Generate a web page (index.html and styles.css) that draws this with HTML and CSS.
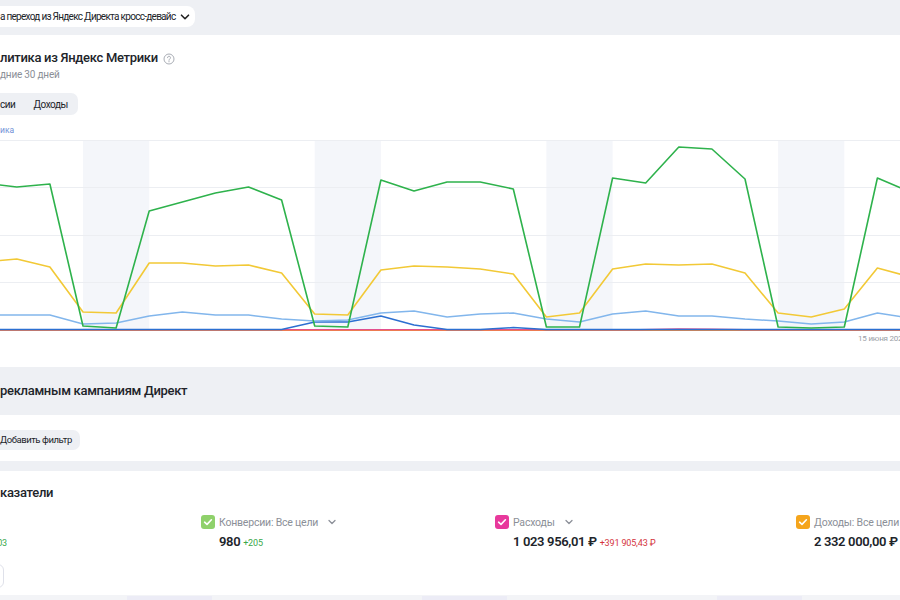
FILE: index.html
```html
<!DOCTYPE html>
<html lang="ru">
<head>
<meta charset="utf-8">
<title>Аналитика</title>
<link rel="stylesheet" href="styles.css">
</head>
<body>
<div class="page">
  <div class="topbar">
    <button class="select">а переход из Яндекс Директа кросс-девайс
      <svg class="chev" width="10" height="10" viewBox="0 0 10 10"><path d="M1.5 3.2 5 6.7 8.5 3.2" fill="none" stroke="#222" stroke-width="1.6" stroke-linecap="round" stroke-linejoin="round"/></svg>
    </button>
  </div>

  <section class="panel analytics">
    <h2 class="title">литика из Яндекс Метрики
      <svg class="help" width="12" height="12" viewBox="0 0 12 12"><circle cx="6" cy="6" r="5" fill="none" stroke="#a9adb5" stroke-width="1"/><path d="M4.5 4.7a1.5 1.5 0 1 1 2.1 1.4c-.4.2-.6.5-.6.9v.3" fill="none" stroke="#a9adb5" stroke-width="1" stroke-linecap="round"/><circle cx="6" cy="8.7" r=".6" fill="#a9adb5"/></svg>
    </h2>
    <div class="subtitle">дние 30 дней</div>
    <div class="tabs"><span class="tab">сии</span><span class="tab">Доходы</span></div>
    <div class="legend">ика</div>
    <svg class="chart" width="900" height="210" viewBox="0 136 900 210">
      <g fill="#f4f6fa">
        <rect x="83" y="140" width="66.2" height="190"/>
        <rect x="314.7" y="140" width="66.2" height="190"/>
        <rect x="546.4" y="140" width="66.2" height="190"/>
        <rect x="778.1" y="140" width="66.2" height="190"/>
      </g>
      <g stroke="#eceef2" stroke-width="1">
        <line x1="0" y1="140.5" x2="900" y2="140.5"/>
        <line x1="0" y1="187.5" x2="900" y2="187.5"/>
        <line x1="0" y1="235.5" x2="900" y2="235.5"/>
        <line x1="0" y1="282.5" x2="900" y2="282.5"/>
      </g>
      <g fill="none" stroke-linejoin="round" stroke-linecap="round">
        <polyline stroke="#f08a3c" stroke-width="1.6" points="-20,330.2 920,330.2"/>
        <polyline stroke="#e3508f" stroke-width="1.2" points="-20,329.6 640,329.6 678.8,328.9 711.9,329 745,329.6 920,329.6"/>
        <polyline stroke="#2c6fd1" stroke-width="1.5" points="-16.3,329.5 281.6,329.5 314.7,322 347.8,322 380.9,316 414,325 447.1,329.5 480.2,329.5 513.3,327.6 546.4,329.5 910.5,329.5"/>
        <polyline stroke="#82b6ec" stroke-width="1.5" points="-16.3,315 16.8,315 49.9,315 83,324 116.1,323 149.2,316 182.3,312 215.4,315 248.5,315 281.6,319 314.7,321 347.8,320 380.9,313 414,311 447.1,317 480.2,314 513.3,313 546.4,319 579.5,322 612.6,314 645.7,311 678.8,316 711.9,316 745,319 778.1,321 811.2,324 844.3,322 877.4,313 910.5,318"/>
        <polyline stroke="#f2c936" stroke-width="1.6" points="-16.3,262 16.8,259 49.9,267 83,312 116.1,313 149.2,263 182.3,263 215.4,266 248.5,265 281.6,273 314.7,314 347.8,315 380.9,270 414,266 447.1,267 480.2,269 513.3,274 546.4,317 579.5,313 612.6,269 645.7,264 678.8,265 711.9,264 745,273 778.1,313 811.2,317 844.3,309 877.4,268 910.5,277"/>
        <polyline stroke="#2eb24c" stroke-width="1.6" points="-16.3,183 16.8,187 49.9,184 83,326 116.1,328 149.2,211 182.3,202 215.4,193 248.5,187 281.6,200 314.7,326 347.8,327 380.9,180 414,191 447.1,182 480.2,182 513.3,189 546.4,327 579.5,327 612.6,178 645.7,183 678.8,147 711.9,149 745,179 778.1,327 811.2,328 844.3,327 877.4,178 910.5,192"/>
      </g>
      <text x="858" y="341" class="axis">15 июня 2024</text>
    </svg>
  </section>

  <div class="section-head"><h2 class="title">рекламным кампаниям Директ</h2></div>
  <div class="filters"><button class="filter-btn">Добавить фильтр</button></div>

  <section class="panel metrics">
    <h2 class="title">казатели</h2>
    <div class="metric-row">
      <div class="metric first">
        <div class="metric-head"><span class="check c-blue"></span><span class="metric-label">Клики</span></div>
        <div class="metric-value">3 487 <span class="delta up">+1 203</span></div>
      </div>
      <div class="metric">
        <div class="metric-head">
          <span class="check c-green"><svg width="14" height="14" viewBox="0 0 14 14"><path d="M3.6 7.2 6 9.4 10.4 4.8" fill="none" stroke="#fff" stroke-width="1.6" stroke-linecap="round" stroke-linejoin="round"/></svg></span>
          <span class="metric-label">Конверсии: Все цели</span>
          <svg class="mchev" width="10" height="10" viewBox="0 0 10 10"><path d="M2 3.5 5 6.5 8 3.5" fill="none" stroke="#8c9099" stroke-width="1.3" stroke-linecap="round" stroke-linejoin="round"/></svg>
        </div>
        <div class="metric-value">980 <span class="delta up">+205</span></div>
      </div>
      <div class="metric">
        <div class="metric-head">
          <span class="check c-pink"><svg width="14" height="14" viewBox="0 0 14 14"><path d="M3.6 7.2 6 9.4 10.4 4.8" fill="none" stroke="#fff" stroke-width="1.6" stroke-linecap="round" stroke-linejoin="round"/></svg></span>
          <span class="metric-label">Расходы</span>
          <svg class="mchev" width="10" height="10" viewBox="0 0 10 10"><path d="M2 3.5 5 6.5 8 3.5" fill="none" stroke="#8c9099" stroke-width="1.3" stroke-linecap="round" stroke-linejoin="round"/></svg>
        </div>
        <div class="metric-value">1 023 956,01 ₽ <span class="delta down">+391 905,43 ₽</span></div>
      </div>
      <div class="metric">
        <div class="metric-head">
          <span class="check c-orange"><svg width="14" height="14" viewBox="0 0 14 14"><path d="M3.6 7.2 6 9.4 10.4 4.8" fill="none" stroke="#fff" stroke-width="1.6" stroke-linecap="round" stroke-linejoin="round"/></svg></span>
          <span class="metric-label">Доходы: Все цели</span>
        </div>
        <div class="metric-value">2 332 000,00 ₽ <span class="delta up">+1 024 000,00 ₽</span></div>
      </div>
    </div>
    <button class="more-btn">Показать</button>
  </section>

  <div class="bottom-strip">
    <span class="ghost"></span><span class="ghost"></span><span class="ghost"></span>
  </div>
</div>
</body>
</html>
```

FILE: styles.css
```css
html, body {
  margin: 0;
  padding: 0;
}
body {
  width: 900px;
  height: 600px;
  overflow: hidden;
  background: #eef0f4;
  font-family: Roboto, "Noto Sans", sans-serif;
  color: #21242a;
}
.page {
  width: 900px;
  overflow: hidden;
}
.topbar {
  height: 35px;
  box-sizing: border-box;
  padding-top: 5px;
}
.select {
  display: inline-flex;
  align-items: center;
  gap: 5px;
  height: 21px;
  margin-left: -8px;
  padding: 0 5px 0 8px;
  border: 0;
  border-radius: 8px;
  background: #fff;
  font-family: inherit;
  font-size: 10px;
  letter-spacing: -0.72px;
  color: #21242a;
  white-space: nowrap;
}
.panel {
  background: #fff;
}
.analytics {
  padding-top: 13px;
  padding-bottom: 21px;
}
.title {
  margin: 0;
  font-size: 13px;
  font-weight: 500;
  letter-spacing: -0.3px;
  line-height: 20px;
  white-space: nowrap;
  display: flex;
  align-items: center;
  gap: 5px;
}
.help {
  margin-top: 1px;
}
.subtitle {
  font-size: 10px;
  letter-spacing: -0.2px;
  line-height: 14px;
  color: #8b8f97;
}
.tabs {
  display: inline-flex;
  align-items: center;
  gap: 18px;
  margin-top: 11px;
  margin-left: -10px;
  height: 22px;
  padding: 0 10px;
  background: #eef0f4;
  border-radius: 7px;
  font-size: 10px;
  letter-spacing: -0.45px;
}
.legend {
  margin-top: 9px;
  font-size: 8.5px;
  line-height: 12px;
  color: #6f8fd6;
}
.chart {
  display: block;
}
.axis {
  font-family: Roboto, sans-serif;
  font-size: 8px;
  letter-spacing: -0.2px;
  fill: #9a9ea6;
}
.section-head {
  height: 48px;
  display: flex;
  align-items: center;
}
.filters {
  background: #fff;
  height: 46px;
  box-sizing: border-box;
  padding-top: 13px;
}
.filter-btn {
  height: 20px;
  margin-left: -10px;
  padding: 0 8px 0 10px;
  border: 0;
  border-radius: 7px;
  background: #eef0f4;
  font-family: inherit;
  font-size: 9.5px;
  letter-spacing: -0.45px;
  color: #21242a;
}
.metrics {
  margin-top: 10px;
  height: 124px;
  box-sizing: border-box;
  padding-top: 12px;
}
.metric-row {
  display: grid;
  grid-template-columns: 294px 294px 301px auto;
  margin-left: -93px;
  margin-top: 12px;
}
.metric-head {
  display: flex;
  align-items: center;
  height: 14px;
}
.check {
  width: 14px;
  height: 14px;
  border-radius: 3px;
  display: inline-flex;
  flex: none;
}
.c-blue { background: #5a8be0; }
.c-green { background: #8fd16b; }
.c-pink { background: #e8399c; }
.c-orange { background: #f5a51c; }
.metric-label {
  margin-left: 4px;
  font-size: 10.5px;
  letter-spacing: -0.2px;
  color: #8b8f97;
  white-space: nowrap;
}
.mchev {
  margin-left: 9px;
}
.metric-value {
  margin-top: 4px;
  padding-left: 18px;
  font-size: 13px;
  font-weight: 600;
  letter-spacing: -0.35px;
  line-height: 18px;
  white-space: nowrap;
}
.first .metric-value {
  padding-left: 0;
  width: 100px;
  text-align: right;
}
.delta {
  font-size: 9px;
  font-weight: 400;
  letter-spacing: -0.15px;
}
.up { color: #3aa84a; }
.down { color: #d4343c; }
.more-btn {
  display: block;
  margin-top: 12px;
  margin-left: -76px;
  width: 80px;
  height: 24px;
  border: 1px solid #dfe1ea;
  border-radius: 6px;
  background: #fff;
  font-family: inherit;
  font-size: 11px;
}
.bottom-strip {
  height: 5px;
  background: #f3f4f7;
  display: flex;
  gap: 210px;
  padding-left: 127px;
  padding-top: 1px;
}
.ghost {
  width: 85px;
  height: 4px;
  background: #ececf6;
}
```
